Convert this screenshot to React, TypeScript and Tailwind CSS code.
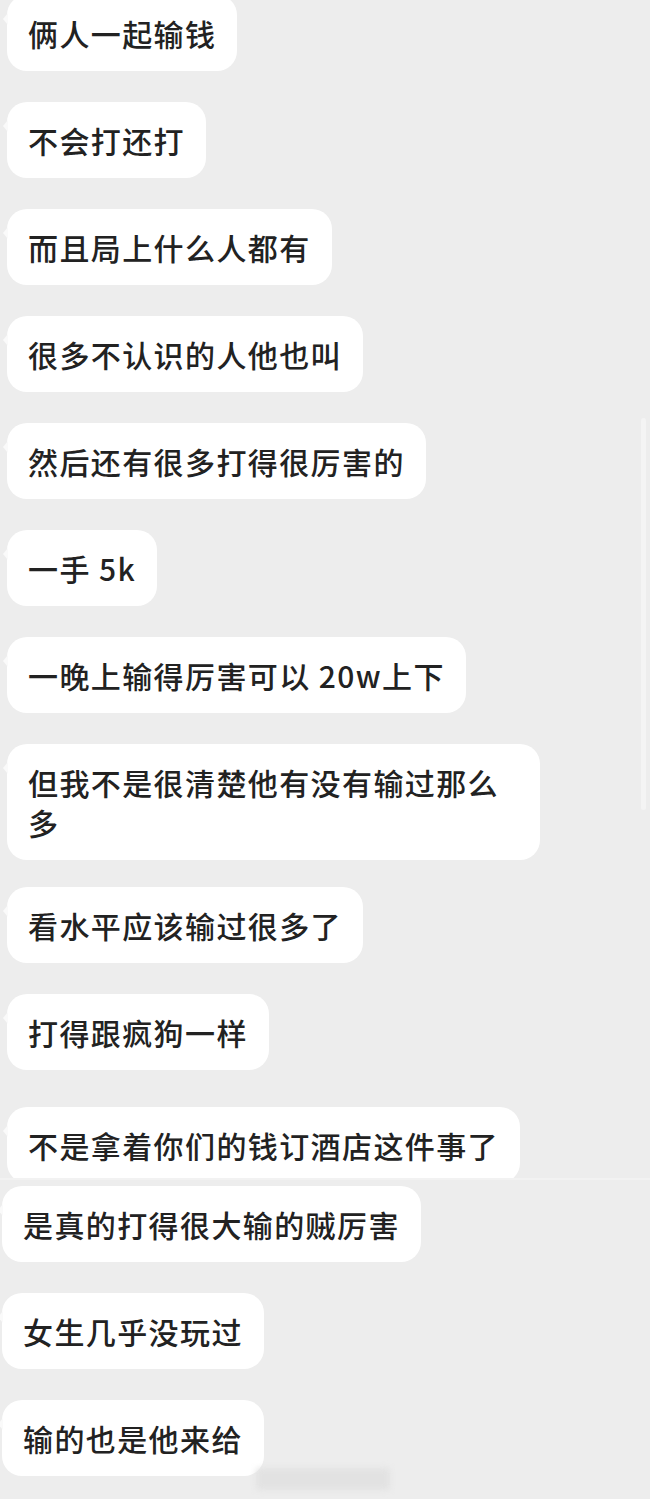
const firstPart = [
  '俩人一起输钱',
  '不会打还打',
  '而且局上什么人都有',
  '很多不认识的人他也叫',
  '然后还有很多打得很厉害的',
  '一手 5k',
  '一晚上输得厉害可以 20w上下',
  '但我不是很清楚他有没有输过那么多',
  '看水平应该输过很多了',
  '打得跟疯狗一样',
  '不是拿着你们的钱订酒店这件事了',
];

const secondPart = ['是真的打得很大输的贼厉害', '女生几乎没玩过', '输的也是他来给'];

function Bubble({ text, className = '' }: { text: string; className?: string }) {
  return (
    <div className={`relative self-start max-w-[533px] ${className}`}>
      <div className="absolute -left-[4px] top-[18px] w-0 h-0 border-y-[6px] border-y-transparent border-r-[5px] border-r-[#fafafa]" />
      <div className="bg-white rounded-[20px] px-[21px] py-[18px] text-[30px] leading-[40px] tracking-[1.4px] font-medium text-[#222]">
        {text}
      </div>
    </div>
  );
}

export default function App() {
  return (
    <div
      className="w-[650px] h-[1499px] bg-[#ededed] overflow-hidden"
      style={{ fontFamily: '"Noto Sans CJK SC", "Noto Sans", sans-serif' }}
    >
      <div className="relative h-[1178px] overflow-hidden">
        <div className="flex flex-col gap-[31px] pl-[7px] -mt-[5px]">
          {firstPart.map((t, i) => (
            <Bubble
              key={i}
              text={t}
              className={i === firstPart.length - 1 ? 'mt-[6px]' : i === 8 ? '-mt-[4px]' : ''}
            />
          ))}
        </div>
        {/* faint scrollbar */}
        <div className="absolute right-[4px] top-[418px] w-[5px] h-[392px] rounded-full bg-[#f4f4f4]" />
      </div>
      <div className="h-[2px] bg-[#f2f2f2]" />
      <div className="relative flex flex-col gap-[31px] pl-[2px] pt-[6px]">
        {secondPart.map((t, i) => (
          <Bubble key={i} text={t} />
        ))}
        {/* blurred watermark */}
        <div className="absolute left-[256px] top-[288px] w-[134px] h-[22px] bg-[#e2e2e2] blur-[3px] rounded" />
      </div>
    </div>
  );
}
